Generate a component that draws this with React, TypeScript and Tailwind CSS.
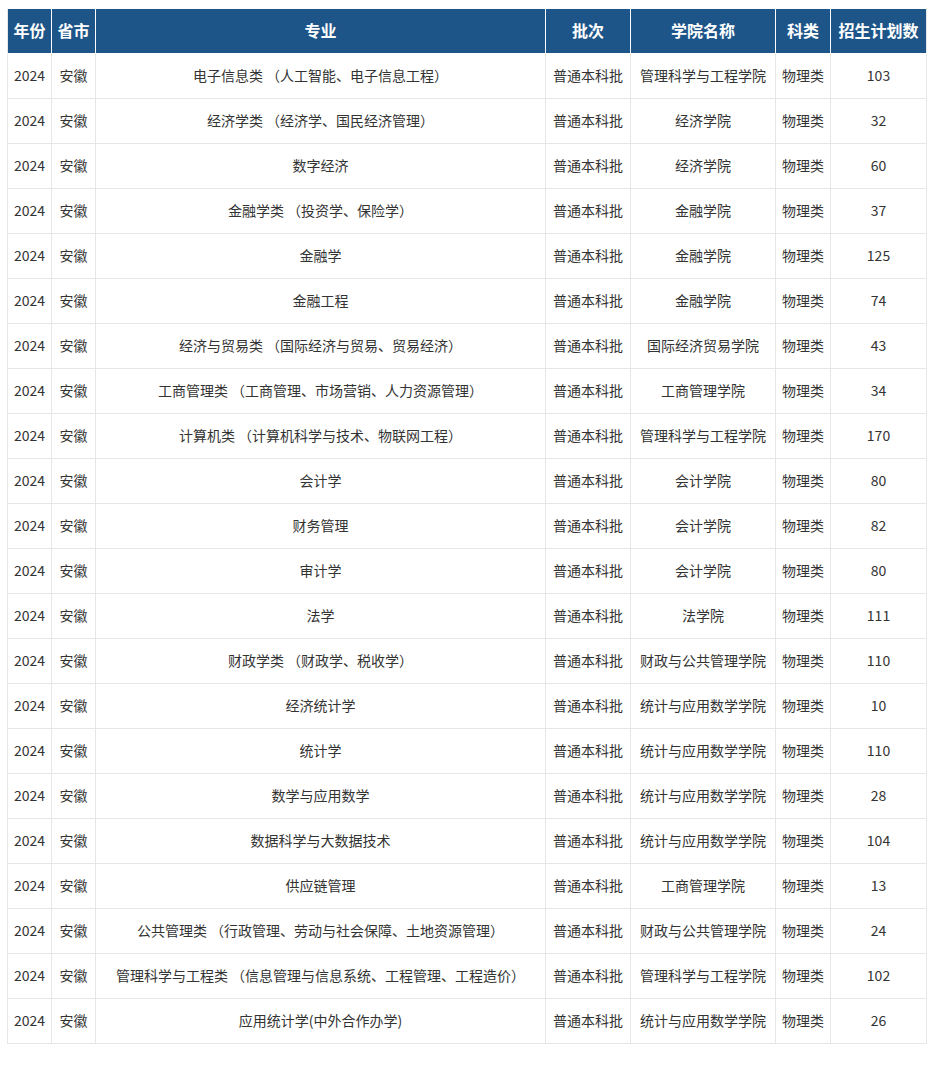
import React from 'react';

// 2024 安徽 招生计划表

const ROWS: Array<[string, string, number]> = [
  ['电子信息类 （人工智能、电子信息工程）', '管理科学与工程学院', 103],
  ['经济学类 （经济学、国民经济管理）', '经济学院', 32],
  ['数字经济', '经济学院', 60],
  ['金融学类 （投资学、保险学）', '金融学院', 37],
  ['金融学', '金融学院', 125],
  ['金融工程', '金融学院', 74],
  ['经济与贸易类 （国际经济与贸易、贸易经济）', '国际经济贸易学院', 43],
  ['工商管理类 （工商管理、市场营销、人力资源管理）', '工商管理学院', 34],
  ['计算机类 （计算机科学与技术、物联网工程）', '管理科学与工程学院', 170],
  ['会计学', '会计学院', 80],
  ['财务管理', '会计学院', 82],
  ['审计学', '会计学院', 80],
  ['法学', '法学院', 111],
  ['财政学类 （财政学、税收学）', '财政与公共管理学院', 110],
  ['经济统计学', '统计与应用数学学院', 10],
  ['统计学', '统计与应用数学学院', 110],
  ['数学与应用数学', '统计与应用数学学院', 28],
  ['数据科学与大数据技术', '统计与应用数学学院', 104],
  ['供应链管理', '工商管理学院', 13],
  ['公共管理类 （行政管理、劳动与社会保障、土地资源管理）', '财政与公共管理学院', 24],
  ['管理科学与工程类 （信息管理与信息系统、工程管理、工程造价）', '管理科学与工程学院', 102],
  ['应用统计学(中外合作办学)', '统计与应用数学学院', 26],
];

const HEAD = ['年份', '省市', '专业', '批次', '学院名称', '科类', '招生计划数'];
const WIDTHS = [44, 44, 450, 85, 145, 55, 96];

const td = 'h-[45px] border border-[#e6e6e6] text-center align-middle p-0 pb-[2px]';

export default function App() {
  return (
    <div className="bg-white min-h-[1090px] pt-[8px] pl-[7px] font-['Microsoft_YaHei','Noto_Sans_CJK_SC',sans-serif] text-[14px] text-[#333]">
      <table className="border-collapse table-fixed w-[920px]">
        <colgroup>
          {WIDTHS.map((w, i) => (
            <col key={i} style={{ width: w }} />
          ))}
        </colgroup>
        <thead>
          <tr>
            {HEAD.map((h, i) => (
              <th
                key={h}
                className={`h-[45px] p-0 pb-[2px] bg-[#1e5589] text-white text-[16px] font-bold text-center align-middle border border-white border-t-[#e6e6e6]${
                  i === 0 ? ' border-l-[#e6e6e6]' : ''
                }${i === HEAD.length - 1 ? ' border-r-[#e6e6e6]' : ''}`}
              >
                {h}
              </th>
            ))}
          </tr>
        </thead>
        <tbody>
          {ROWS.map(([major, college, num], i) => (
            <tr key={i}>
              <td className={td}>2024</td>
              <td className={td}>安徽</td>
              <td className={td}>{major}</td>
              <td className={td}>普通本科批</td>
              <td className={td}>{college}</td>
              <td className={td}>物理类</td>
              <td className={td}>{num}</td>
            </tr>
          ))}
        </tbody>
      </table>
    </div>
  );
}
